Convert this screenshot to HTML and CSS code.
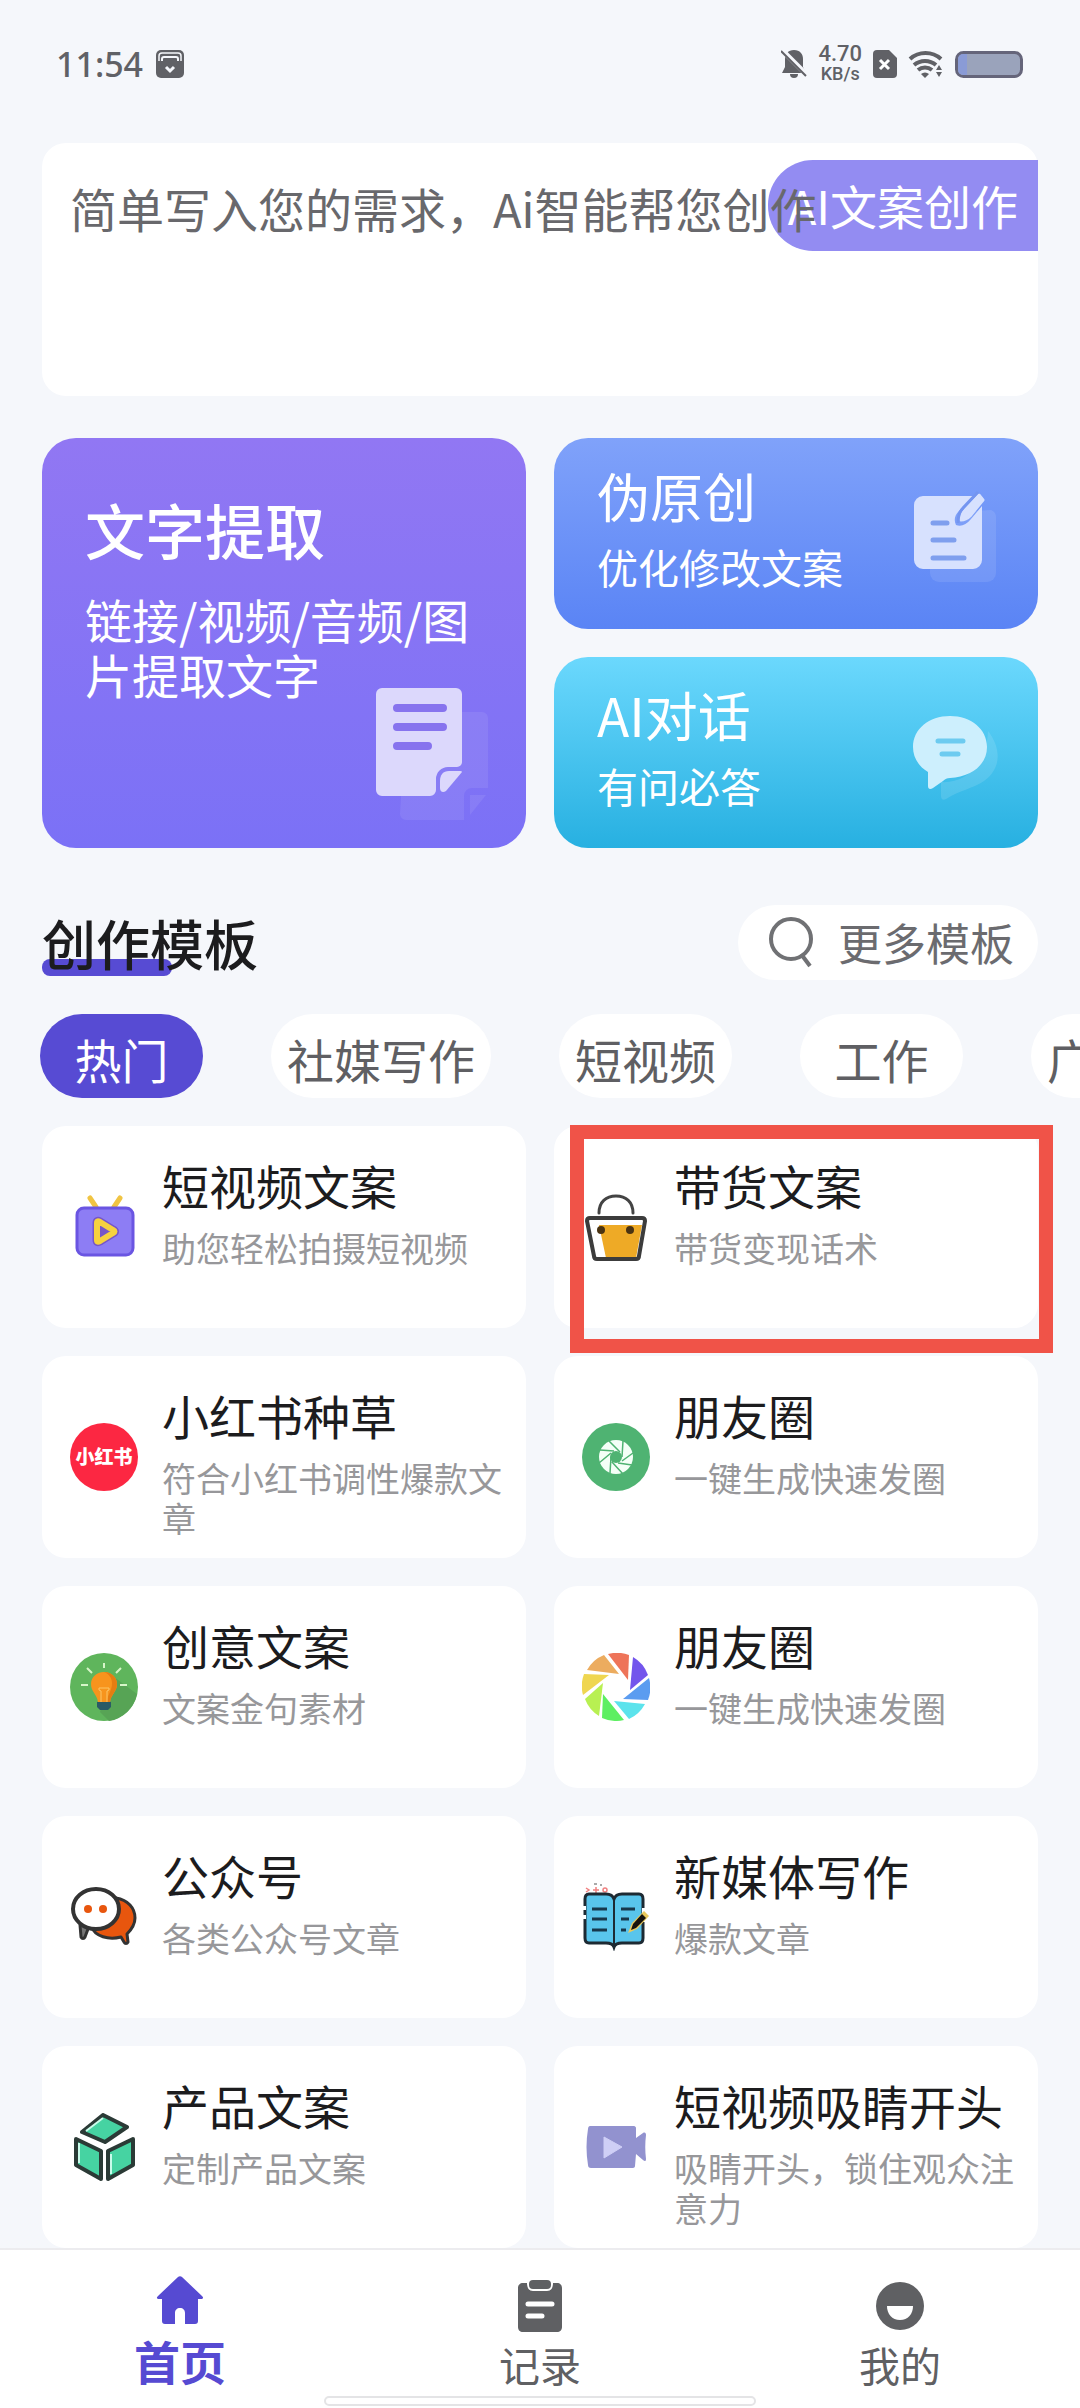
FILE: index.html
```html
<!DOCTYPE html>
<html lang="zh-CN">
    <head>
        <meta charset="UTF-8">
        <meta name="viewport" content="width=device-width, initial-scale=1">
        <title>AI文案创作</title>
        <link rel="stylesheet" href="styles.css">
    </head>
    <body>
        <header class="status-bar">
            <div class="status-group">
                <span class="status-time">11:54</span>
                <svg class="status-app" width="28" height="28" viewBox="0 0 28 28">
                    <rect width="28" height="28" rx="5" fill="#606166"/>
                    <path d="M3 11V6a3 3 0 0 1 3-3h16a3 3 0 0 1 3 3v5" fill="none" stroke="#f5f7fb" stroke-width="1.500"/>
                    <path d="M6 11V9a2 2 0 0 1 2-2h12a2 2 0 0 1 2 2v2" fill="none" stroke="#f5f7fb" stroke-width="2"/>
                    <path d="M10 17l4 4 4-4" fill="none" stroke="#f5f7fb" stroke-width="3"/>
                </svg>
            </div>
            <div class="status-group">
                <svg width="26" height="30" viewBox="0 0 26 30">
                    <path d="M13 1c6 0 9 4 9 9v8l3 6H1l3-6v-8c0-5 3-9 9-9z" fill="#606166"/>
                    <path d="M9 25h8a4 4 0 0 1-8 0z" fill="#606166"/>
                    <path d="M0 0L26 26" stroke="#f5f7fb" stroke-width="5"/>
                    <path d="M0 2L25 27" stroke="#606166" stroke-width="2"/>
                </svg>
                <div class="status-speed"><span>4.70</span><span class="speed-unit">KB/s</span></div>
                <svg width="24" height="28" viewBox="0 0 24 28">
                    <path d="M4 0h12l8 8v16a4 4 0 0 1-4 4H4a4 4 0 0 1-4-4V4a4 4 0 0 1 4-4z" fill="#606166"/>
                    <path d="M7 10l9 9M16 10l-9 9" stroke="#fff" stroke-width="3"/>
                </svg>
                <svg width="36" height="28" viewBox="0 0 36 28">
                    <g fill="none" stroke="#606166" stroke-width="4">
                        <path d="M2 9a23 23 0 0 1 31 0"/>
                        <path d="M6 15a17 17 0 0 1 22 0"/>
                        <path d="M10 20a11 11 0 0 1 14 0"/>
                    </g>
                    <path d="M13 24a6 6 0 0 1 8 0l-4 4z" fill="#606166"/>
                    <path d="M28 20l3-5 3 5zM28 22h6l-3 5z" fill="#606166"/>
                </svg>
                <svg class="status-battery" width="68" height="27" viewBox="0 0 68 27">
                    <rect x="1.500" y="1.500" width="65" height="24" rx="7" fill="#9aa3bb" stroke="#65657a" stroke-width="3"/>
                    <path d="M12 3H8a5 5 0 0 0-5 5v11a5 5 0 0 0 5 5h4z" fill="#8a9bd6"/>
                </svg>
            </div>
        </header>

        <main class="page">
            <form class="prompt">
                <textarea class="prompt-input" rows="3" aria-label="创作需求" placeholder="简单写入您的需求，Ai智能帮您创作"></textarea>
                <button class="prompt-button" type="button">AI文案创作</button>
            </form>

            <section class="features">
                <a class="feature feature-extract" href="#">
                    <div>
                        <h2>文字提取</h2>
                        <p>链接/视频/音频/图片提取文字</p>
                    </div>
                    <svg class="extract-icon" width="112" height="134" viewBox="0 0 112 134">
                        <path d="M30 24h76a6 6 0 0 1 6 6v70H96a8 8 0 0 0-8 8v24H30a6 6 0 0 1-6-6z" fill="#fff" opacity=".08"/>
                        <path d="M94 107h16l-16 20z" fill="#fff" opacity=".08"/>
                        <path d="M6 0h74a6 6 0 0 1 6 6v68a5 5 0 0 1-5 5h-9a12 12 0 0 0-12 12v11a6 6 0 0 1-6 6H6a6 6 0 0 1-6-6V6a6 6 0 0 1 6-6z" fill="#dcd8fc"/>
                        <path d="M86 84L70 103c-3 2-6 1-6-3v-7c0-6 3-10 9-10h10c2 0 3 0 3 1z" fill="#dcd8fc"/>
                        <path d="M21 20h46M21 39h46M21 58h31" stroke="#8773ee" stroke-width="8" stroke-linecap="round"/>
                    </svg>
                </a>
                <a class="feature feature-rewrite" href="#">
                    <div>
                        <h2>伪原创</h2>
                        <p>优化修改文案</p>
                    </div>
                    <svg width="86" height="100" viewBox="0 0 86 100">
                        <path d="M79 26c4 2 5 4 5 8v55a9 9 0 0 1-9 9H27a9 9 0 0 1-9-9V30z" fill="#fff" opacity=".1"/>
                        <path d="M11 12h51L47 27c-5 5-5 10-3 14 5 2 10 0 15-6l11-13v54a9 9 0 0 1-9 9H11a9 9 0 0 1-9-9V21a9 9 0 0 1 9-9z" fill="#d7e1fe"/>
                        <path d="M49 36c0-5 1-7 4-10l14-15 4 5-13 16c-3 3-5 4-9 4z" fill="#d7e1fe" stroke="#d7e1fe" stroke-width="3" stroke-linejoin="round"/>
                        <path d="M46 39c0-7 1-11 5-15l15-16" fill="none" stroke="#7495f0" stroke-width="3"/>
                        <path d="M21 39h14M21 56h21M21 74h31" stroke="#7f9fee" stroke-width="5" stroke-linecap="round"/>
                    </svg>
                </a>
                <a class="feature feature-chat" href="#">
                    <div>
                        <h2>AI对话</h2>
                        <p>有问必答</p>
                    </div>
                    <svg width="86" height="100" viewBox="0 0 86 100">
                        <path d="M76 28c14 18 13 38-4 50-12 8-24 9-38 18-3 2-5 0-5-3V79c24 2 46-18 47-51z" fill="#fff" opacity=".12"/>
                        <path d="M38 13c21 0 37 13 37 31S59 74 38 75c-3 0-5 1-7 3L21 85c-3 2-5 1-5-2V69C6 63 1 54 1 44c0-18 16-31 37-31z" fill="#cdeffd"/>
                        <path d="M26 38h25M30 51h16" stroke="#6dcbf0" stroke-width="5" stroke-linecap="round"/>
                    </svg>
                </a>
            </section>

            <div class="section-head">
                <h1 class="section-title">创作模板</h1>
                <button class="more-button" type="button">
                    <svg width="46" height="52" viewBox="0 0 46 52">
                        <circle cx="23" cy="23" r="20" fill="none" stroke="#707174" stroke-width="4"/>
                        <path d="M33 38l9 12" stroke="#707174" stroke-width="4"/>
                    </svg>
                    更多模板
                </button>
            </div>
        </main>

        <div class="tabs">
            <button class="tab tab-active" type="button">热门</button>
            <button class="tab" type="button">社媒写作</button>
            <button class="tab" type="button">短视频</button>
            <button class="tab" type="button">工作</button>
            <button class="tab" type="button">广告文案</button>
        </div>

        <section class="cards">
            <a class="card" href="#">
                <svg class="card-icon" viewBox="0 0 68 68">
                    <path d="M20 5l6 9M50 5l-6 9" stroke="#f0c443" stroke-width="5" stroke-linecap="round"/>
                    <rect x="7" y="15" width="56" height="47" rx="7" fill="#8d7df4" stroke="#6a55e2" stroke-width="3"/>
                    <path d="M27 30v17c0 2 1 2 3 1l13-8c2-1 2-2 0-3l-13-8c-2-1-3-1-3 1z" fill="#7656c8" stroke="#7656c8" stroke-width="9" stroke-linejoin="round"/>
                    <path d="M27 30v17c0 2 1 2 3 1l13-8c2-1 2-2 0-3l-13-8c-2-1-3-1-3 1z" fill="#7656c8" stroke="#f6d23f" stroke-width="6" stroke-linejoin="round"/>
                </svg>
                <div class="card-text">
                    <h3>短视频文案</h3>
                    <p>助您轻松拍摄短视频</p>
                </div>
            </a>
            <a class="card card-marked" href="#">
                <svg class="card-icon" viewBox="0 0 68 68">
                    <path d="M17 20C17 9 24 3 34 3s17 6 17 17" fill="none" stroke="#444" stroke-width="3" stroke-linecap="round"/>
                    <path d="M8 25h52c2 0 3 1 3 3l-6 35c0 2-1 3-3 3H15c-2 0-3-1-3-3L5 28c0-2 1-3 3-3z" fill="#fff"/>
                    <path d="M17 32h43l-6 33H24z" fill="#eeaa26"/>
                    <path d="M8 25h52c2 0 3 1 3 3l-6 35c0 2-1 3-3 3H15c-2 0-3-1-3-3L5 28c0-2 1-3 3-3z" fill="none" stroke="#3c3c3c" stroke-width="4"/>
                    <circle cx="19" cy="37" r="4" fill="#4a3312"/>
                    <circle cx="48" cy="37" r="4" fill="#4a3312"/>
                </svg>
                <div class="card-text">
                    <h3>带货文案</h3>
                    <p>带货变现话术</p>
                </div>
            </a>
            <a class="card" href="#">
                <svg class="card-icon" viewBox="0 0 68 68">
                    <circle cx="34" cy="34" r="34" fill="#fc2742"/>
                    <text class="logo-text" x="34" y="41" text-anchor="middle">小红书</text>
                </svg>
                <div class="card-text">
                    <h3>小红书种草</h3>
                    <p>符合小红书调性爆款文章</p>
                </div>
            </a>
            <a class="card" href="#">
                <svg class="card-icon" viewBox="0 0 68 68">
                    <circle cx="34" cy="34" r="34" fill="#4fb372"/>
                    <circle cx="34" cy="34" r="17" fill="#f4fff7"/>
                    <circle cx="34" cy="34" r="6" fill="#4fb372"/>
                    <path d="M27 18l11 11M41 18l-1 16M51 30L40 38M50 42l-14-2M41 51L30 39M28 50l1-16M17 40l12-10M18 27l14 1" stroke="#4fb372" stroke-width="1.500"/>
                </svg>
                <div class="card-text">
                    <h3>朋友圈</h3>
                    <p>一键生成快速发圈</p>
                </div>
            </a>
            <a class="card" href="#">
                <svg class="card-icon" viewBox="0 0 68 68">
                    <circle cx="34" cy="34" r="34" fill="#5fb55c"/>
                    <path d="M44 24l23 17a34 34 0 0 1-28 27l-9-9z" fill="#57a455"/>
                    <path d="M34 10v5M17 15l5 5M51 15l-5 5M11 32h7M50 32h7" stroke="#d6f5c8" stroke-width="2"/>
                    <path d="M34 19c-8 0-13 6-13 12 0 8 6 10 7 18h12c1-8 7-10 7-18 0-6-5-12-13-12z" fill="#f7941d"/>
                    <path d="M34 19c8 0 13 6 13 12 0 8-6 10-7 18h-3c1-9 5-11 5-19 0-5-3-9-8-11z" fill="#e57d12"/>
                    <path d="M31 49V38l-2-1v-2h10v2l-2 1v11" fill="none" stroke="#fbc566" stroke-width="1"/>
                    <path d="M27 49h14v5l-3 3h-8l-3-3z" fill="#2a5a66"/>
                </svg>
                <div class="card-text">
                    <h3>创意文案</h3>
                    <p>文案金句素材</p>
                </div>
            </a>
            <a class="card" href="#">
                <svg class="card-icon" viewBox="0 0 68 68">
                    <path d="M26 1A34 34 0 0 1 47 2L46 27z" fill="#ee7459"/>
                    <path d="M51 4A34 34 0 0 1 66 22L48 37z" fill="#7355ec"/>
                    <path d="M67 25A34 34 0 0 1 66 47L41 46z" fill="#5b9cf0"/>
                    <path d="M63 51A34 34 0 0 1 47 66L32 48z" fill="#5ce3ec"/>
                    <path d="M42 67A34 34 0 0 1 20 65L21 41z" fill="#5def62"/>
                    <path d="M17 63A34 34 0 0 1 3 46L21 30z" fill="#b8f052"/>
                    <path d="M1 42A34 34 0 0 1 2 21L27 22z" fill="#efd650"/>
                    <path d="M5 17A34 34 0 0 1 22 2L37 21z" fill="#ecac5f"/>
                </svg>
                <div class="card-text">
                    <h3>朋友圈</h3>
                    <p>一键生成快速发圈</p>
                </div>
            </a>
            <a class="card" href="#">
                <svg class="card-icon" viewBox="0 0 68 68">
                    <path d="M46 15c12 2 19 10 19 20 0 7-4 12-8 16l1 8c-1 2-3 2-4 0l-3-5c-12 3-26 0-30-11z" fill="#e8560e" stroke="#333" stroke-width="3" stroke-linejoin="round"/>
                    <path d="M10 42l1 12c1 2 3 2 4 0l3-8" fill="#777" stroke="#333" stroke-width="3" stroke-linejoin="round"/>
                    <ellipse cx="26" cy="26" rx="23" ry="20" fill="#fff" stroke="#333" stroke-width="4"/>
                    <circle cx="18" cy="26" r="4" fill="#e8560e"/>
                    <circle cx="33" cy="26" r="4" fill="#e8560e"/>
                </svg>
                <div class="card-text">
                    <h3>公众号</h3>
                    <p>各类公众号文章</p>
                </div>
            </a>
            <a class="card" href="#">
                <svg class="card-icon" viewBox="0 0 68 68">
                    <path d="M4 5l3 2-3 2M21 7a2 2 0 1 0 4 0 2 2 0 1 0-4 0M14 4v6M11 7h6" fill="none" stroke="#f08080" stroke-width="1.500"/>
                    <path d="M12 1h3M18 2h2" stroke="#555" stroke-width="1"/>
                    <path d="M3 16c0-3 1-5 4-5h17c4 0 7 2 8 5 1-3 4-5 8-5h17c3 0 4 2 4 5v39c0 3-1 5-4 5H40c-4 0-7 1-8 4-1-3-4-4-8-4H7c-3 0-4-2-4-5z" fill="#59c5ec" stroke="#1d2a33" stroke-width="3"/>
                    <path d="M32 16v47" stroke="#1d2a33" stroke-width="2"/>
                    <path d="M10 26h15M10 36h15M10 47h15M39 26h14M39 36h8M39 47h5" stroke="#17384c" stroke-width="3"/>
                    <path d="M2 23v4M2 32v4M62 25v14" stroke="#fff" stroke-width="4"/>
                    <path d="M46 50l4-10 12-12 5 5-12 13z" fill="#e9c95c"/>
                    <path d="M49 47l2-6 9-10 4 4-10 10z" fill="#16130d"/>
                </svg>
                <div class="card-text">
                    <h3>新媒体写作</h3>
                    <p>爆款文章</p>
                </div>
            </a>
            <a class="card" href="#">
                <svg class="card-icon" viewBox="0 0 68 68">
                    <g fill="#46d3a2" stroke="#2b3a36" stroke-width="4" stroke-linejoin="round">
                        <path d="M33 2L57 14 35 29 12 19z"/>
                        <path d="M6 26L31 38V66L6 52z"/>
                        <path d="M63 26L38 38V66L63 52z"/>
                    </g>
                    <path d="M9 30v20M41 41v20M16 18L33 5" stroke="#c9fbea" stroke-width="2"/>
                </svg>
                <div class="card-text">
                    <h3>产品文案</h3>
                    <p>定制产品文案</p>
                </div>
            </a>
            <a class="card" href="#">
                <svg class="card-icon" viewBox="0 0 68 68">
                    <path d="M8 13h44c1 0 2 1 2 2v10l7-5c2-1 3 0 3 2-1 8-1 16 0 24 0 2-1 3-3 1l-7-6-1 12c0 1-1 2-2 2H9c-2 0-3-1-3-3-2-12-2-24 0-36 0-2 1-3 2-3z" fill="#9292cf"/>
                    <path d="M22 24l18 10-18 11z" fill="#cfcff6" stroke="#cfcff6" stroke-width="1" stroke-linejoin="round"/>
                </svg>
                <div class="card-text">
                    <h3>短视频吸睛开头</h3>
                    <p>吸睛开头，锁住观众注意力</p>
                </div>
            </a>
        </section>

        <nav class="bottom-nav">
            <a class="nav-item nav-active" href="#">
                <svg width="52" height="56" viewBox="0 0 52 56">
                    <path d="M24 3c1-1 3-1 4 0l20 19c2 2 1 3-1 3h-3v22c0 2-1 3-3 3H31V39c0-3-2-5-5-5s-5 2-5 5v11H11c-2 0-3-1-3-3V25H5c-2 0-3-1-1-3z" fill="#564ad2"/>
                </svg>
                <span>首页</span>
            </a>
            <a class="nav-item" href="#">
                <svg width="52" height="60" viewBox="0 0 52 60">
                    <path d="M9 9h4c0 5 2 8 6 8h14c4 0 6-3 6-8h4c3 0 5 2 5 5v39c0 3-2 5-5 5H9c-3 0-5-2-5-5V14c0-3 2-5 5-5z" fill="#5f6063"/>
                    <rect x="15" y="6" width="22" height="9" rx="4" fill="#5f6063"/>
                    <path d="M14 30h24M14 42h14" stroke="#fff" stroke-width="5" stroke-linecap="round"/>
                </svg>
                <span>记录</span>
            </a>
            <a class="nav-item" href="#">
                <svg width="52" height="60" viewBox="0 0 52 60">
                    <circle cx="26" cy="32" r="24" fill="#5f6063"/>
                    <path d="M13 32h26c0 8-5 14-13 14s-13-6-13-14z" fill="#fff"/>
                </svg>
                <span>我的</span>
            </a>
            <div class="home-indicator"></div>
        </nav>
    </body>
</html>
```

FILE: styles.css
```css
* {
    box-sizing: border-box;
}

body {
    margin: 0;
    padding-bottom: 160px;
    background-color: #f5f7fb;
    color: #1c1c1e;
    font-family: "Noto Sans CJK SC", sans-serif;
    overflow-x: hidden;
}

h1, h2, h3, p {
    margin: 0;
}

a {
    color: inherit;
    text-decoration: none;
}

button, textarea {
    border: none;
    font-family: inherit;
}

svg {
    display: block;
    flex-shrink: 0;
}

.status-bar {
    display: flex;
    justify-content: space-between;
    align-items: center;
    padding: 40px 57px 55px 56px;
    color: #606166;
    font-family: "Noto Sans", sans-serif;
}

.status-group {
    display: flex;
    align-items: center;
    gap: 11px;
}

.status-time {
    font-size: 34px;
    line-height: 48px;
    font-weight: 500;
}

.status-app {
    margin-left: 2px;
}

.status-speed {
    display: flex;
    flex-direction: column;
    align-items: center;
    font-family: Roboto, sans-serif;
    font-size: 22px;
    line-height: 20px;
    font-weight: 500;
}

.speed-unit {
    font-size: 18px;
}

.page {
    padding: 0 42px;
}

.prompt {
    position: relative;
    background-color: #fff;
    border-radius: 24px;
}

.prompt-input {
    position: relative;
    z-index: 1;
    display: block;
    width: 100%;
    padding: 37px 28px 48px;
    background: transparent;
    font-size: 47px;
    line-height: 56px;
    resize: none;
    outline: none;
}

.prompt-input::placeholder {
    color: #68686c;
    opacity: 1;
}

.prompt-button {
    position: absolute;
    top: 17px;
    right: 0;
    padding: 15px 20px 16px;
    background-color: #938cf2;
    border-radius: 45px 0 0 45px;
    color: #fff;
    font-size: 47px;
    line-height: 60px;
}

.features {
    display: grid;
    grid-template-columns: 1fr 1fr;
    gap: 28px;
    margin-top: 42px;
}

.feature {
    display: flex;
    justify-content: space-between;
    align-items: center;
    padding: 25px 40px 38px 43px;
    border-radius: 34px;
    color: #fff;
}

.feature h2 {
    margin-bottom: 14px;
    font-size: 53px;
    line-height: 64px;
    font-weight: 400;
}

.feature p {
    font-size: 41px;
    line-height: 50px;
}

.feature svg {
    margin-bottom: -14px;
}

.feature-extract {
    position: relative;
    grid-row: span 2;
    align-items: flex-start;
    padding: 55px 43px;
    background: linear-gradient(#9177f3, #7b71f6);
}

.feature-extract h2 {
    margin-bottom: 26px;
    font-size: 60px;
    line-height: 72px;
    font-weight: 500;
}

.feature-extract p {
    font-size: 47px;
    line-height: 55px;
}

.feature-extract .extract-icon {
    position: absolute;
    right: 38px;
    bottom: 26px;
    margin: 0;
}

.feature-rewrite {
    background: linear-gradient(#80a2fa, #5a84f5);
}

.feature-chat {
    background: linear-gradient(#6bd8fd, #27b0e1);
}

.section-head {
    display: flex;
    justify-content: space-between;
    align-items: center;
    margin-top: 57px;
}

.section-title {
    position: relative;
    z-index: 0;
    font-size: 54px;
    line-height: 66px;
    font-weight: 500;
}

.section-title::before {
    content: "";
    position: absolute;
    z-index: -1;
    left: 0;
    bottom: 0;
    width: 60%;
    height: 17px;
    background-color: #574bd3;
    border-radius: 8px;
}

.more-button {
    display: flex;
    align-items: center;
    gap: 24px;
    padding: 10px 24px 11px 30px;
    background-color: #fff;
    border-radius: 38px;
    color: #6b6b6f;
    font-size: 44px;
    line-height: 54px;
}

.tabs {
    display: flex;
    gap: 68px;
    padding: 34px 0 28px 40px;
    overflow: hidden;
}

.tab {
    flex-shrink: 0;
    min-width: 163px;
    padding: 15px 16px 9px;
    background-color: #fff;
    border-radius: 42px;
    color: #5f5f63;
    font-size: 47px;
    line-height: 60px;
}

.tab-active {
    background-color: #574bd3;
    color: #fff;
}

.cards {
    display: grid;
    grid-template-columns: 1fr 1fr;
    grid-auto-rows: 1fr;
    gap: 28px;
    padding: 0 42px;
}

.card {
    position: relative;
    display: flex;
    gap: 24px;
    padding: 29px 20px 20px 28px;
    background-color: #fff;
    border-radius: 24px;
}

.card-icon {
    width: 68px;
    height: 68px;
    margin-top: 38px;
}

.card h3 {
    margin-bottom: 13px;
    font-size: 47px;
    line-height: 60px;
    font-weight: 400;
}

.card p {
    color: #97979a;
    font-size: 34px;
    line-height: 40px;
}

.card-marked {
    z-index: 1;
}

.card-marked::after {
    content: "";
    position: absolute;
    inset: -1px -15px -25px 16px;
    border: 14px solid #f05348;
}

.logo-text {
    fill: #fff;
    font-size: 19px;
    font-weight: 900;
}

.bottom-nav {
    position: fixed;
    left: 0;
    right: 0;
    bottom: 0;
    z-index: 2;
    display: flex;
    padding: 24px 0 14px;
    background-color: #fff;
    border-top: 2px solid #ececef;
}

.nav-item {
    display: flex;
    flex: 1;
    flex-direction: column;
    align-items: center;
    color: #5f6063;
    font-size: 41px;
    line-height: 60px;
}

.nav-active {
    color: #564ad2;
    font-size: 46px;
    font-weight: 700;
}

.home-indicator {
    position: absolute;
    left: 30%;
    right: 30%;
    bottom: 2px;
    height: 10px;
    background-color: #fff;
    border: 2px solid #e4e4e6;
    border-radius: 5px;
}
```
